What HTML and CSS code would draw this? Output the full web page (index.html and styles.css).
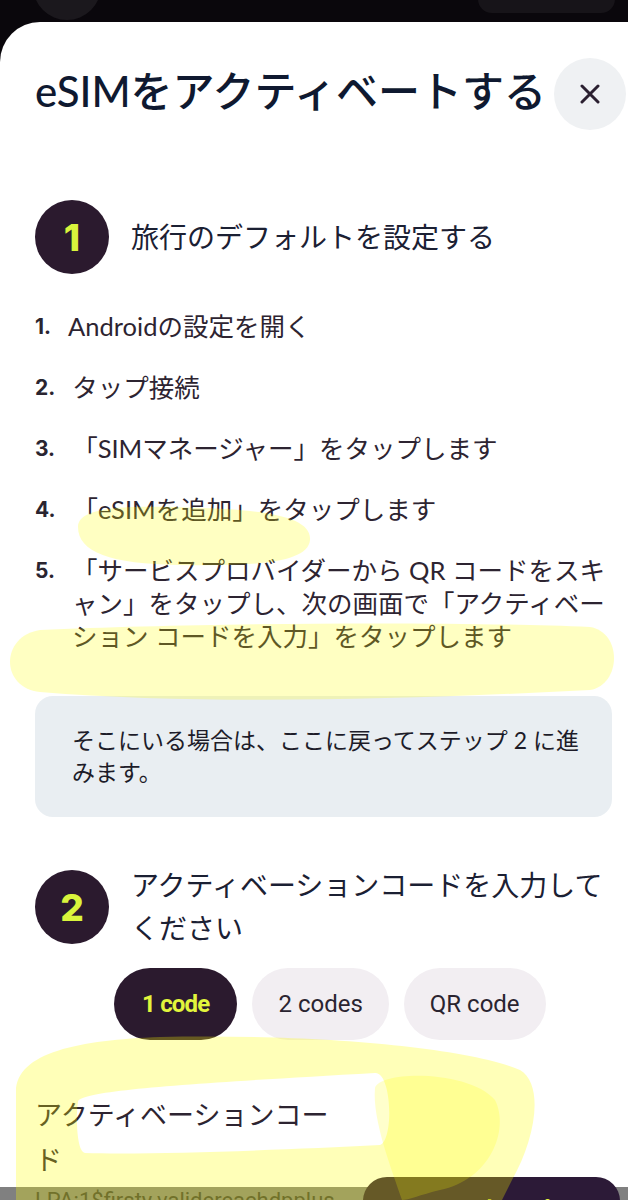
FILE: index.html
```html
<!DOCTYPE html>
<html lang="ja">
<head>
<meta charset="utf-8">
<title>eSIMをアクティベートする</title>
<link rel="stylesheet" href="styles.css">
</head>
<body>
<div class="backdrop">
  <span class="bd-circle"></span>
  <span class="bd-pill"></span>
</div>
<main class="sheet">
  <header class="sheet-head">
    <h1 class="title">eSIMをアクティベートする</h1>
    <button class="close" aria-label="閉じる">
      <svg width="20" height="20" viewBox="0 0 20 20"><path d="M2 2 L18 18 M18 2 L2 18" stroke="#2b2030" stroke-width="3" stroke-linecap="round" fill="none"/></svg>
    </button>
  </header>

  <section class="step step1">
    <div class="step-head">
      <span class="step-num">1</span>
      <h2 class="step-title">旅行のデフォルトを設定する</h2>
    </div>
    <ol class="steps-list">
      <li><span class="n">1.</span><span class="t">Androidの設定を開く</span></li>
      <li><span class="n">2.</span><span class="t">タップ接続</span></li>
      <li><span class="n">3.</span><span class="t">「SIMマネージャー」をタップします</span></li>
      <li><span class="n">4.</span><span class="t">「eSIMを追加」をタップします</span></li>
      <li><span class="n">5.</span><span class="t">「サービスプロバイダーから QR コードをスキャン」をタップし、次の画面で「アクティベーション コードを入力」をタップします</span></li>
    </ol>
    <div class="note">そこにいる場合は、ここに戻ってステップ 2 に進みます。</div>
  </section>

  <section class="step step2">
    <div class="step-head">
      <span class="step-num">2</span>
      <h2 class="step-title">アクティベーションコードを入力してください</h2>
    </div>
    <div class="tabs">
      <button class="tab active">1 code</button>
      <button class="tab">2 codes</button>
      <button class="tab">QR code</button>
    </div>
    <div class="field-label">アクティベーションコード</div>
    <div class="code-row">
      <span class="code-value">LPA:1$firsty.validereachdpplus</span>
      <button class="copy-btn">コードをコピー</button>
    </div>
  </section>
</main>

<svg class="marker-overlay" width="628" height="1200" viewBox="0 0 628 1200" aria-hidden="true">
  <path class="hl" d="M78 527 C 78 504, 140 506, 200 508 C 270 510, 312 518, 310 540 C 308 564, 250 566, 180 565 C 110 564, 78 552, 78 527 Z"/>
  <path class="hl" d="M40 630 C 200 623, 450 621, 590 627 C 622 632, 622 684, 590 690 C 400 700, 200 705, 40 692 C 0 688, 0 636, 40 630 Z"/>
  <path class="hl2" fill-rule="evenodd" d="M16 1092 C 16 1052, 80 1040, 160 1037 C 300 1034, 460 1045, 520 1070 C 545 1085, 535 1140, 512 1180 L 502 1200 L 16 1200 Z M78 1102 C 78 1090, 200 1083, 375 1073 C 392 1072, 394 1140, 380 1145 C 280 1150, 150 1155, 85 1153 C 76 1152, 76 1112, 78 1102 Z"/>
  <path class="hl3" d="M375 1088 C 380 1070, 470 1070, 495 1100 C 510 1130, 490 1180, 440 1190 C 420 1195, 408 1200, 402 1200 C 392 1170, 372 1120, 375 1088 Z"/>
</svg>
</body>
</html>
```
FILE: styles.css
```css
* { box-sizing: border-box; }

body {
  margin: 0;
  background: #0a070c;
  font-family: "Lato", "Noto Sans CJK JP", sans-serif;
  position: relative;
  overflow: hidden;
  height: 1200px;
  text-spacing-trim: space-all;
}

.backdrop {
  height: 22px;
  display: flex;
  justify-content: space-between;
  align-items: flex-start;
  padding: 0 13px 0 33px;
  overflow: hidden;
}
.bd-circle {
  width: 68px;
  height: 68px;
  border-radius: 50%;
  background: #1b181d;
  margin-top: -48px;
}
.bd-pill {
  width: 137px;
  height: 40px;
  border-radius: 14px;
  background: #171419;
  margin-top: -27px;
}

.sheet {
  background: #ffffff;
  border-top-left-radius: 40px;
  padding: 0 16px 0 35px;
  min-height: 1300px;
}

.sheet-head {
  display: flex;
  align-items: center;
  justify-content: space-between;
  padding-top: 36px;
  margin-right: -14px;
}
.title {
  margin: 0;
  font-size: 42px;
  font-weight: 500;
  line-height: 66px;
  padding-bottom: 6px;
  color: #0f1930;
  white-space: nowrap;
}
.close {
  width: 72px;
  height: 72px;
  flex: none;
  border: none;
  border-radius: 50%;
  background: #eff1f3;
  padding: 0;
  display: grid;
  place-items: center;
}

.step1 { margin-top: 70px; }
.step2 { margin-top: 47px; }

.step-head {
  display: flex;
  align-items: center;
  gap: 22px;
}
.step-num {
  width: 74px;
  height: 74px;
  flex: none;
  border-radius: 50%;
  background: #2b1a2e;
  color: #d9f43c;
  font-family: "Inter", sans-serif;
  font-weight: 800;
  font-size: 37px;
  display: grid;
  place-items: center;
}
.step-title {
  margin: 0;
  font-size: 28px;
  font-weight: 400;
  line-height: 43px;
  color: #1b2033;
}

.steps-list {
  list-style: none;
  margin: 36px 0 0;
  padding: 0;
  display: flex;
  flex-direction: column;
  gap: 28px;
}
.steps-list li {
  display: flex;
  gap: 17px;
  font-size: 25.5px;
  line-height: 33px;
  color: #2d2431;
}
.steps-list .n {
  flex: none;
  font-family: "Inter", sans-serif;
  font-weight: 700;
  font-size: 21px;
  color: #2a2530;
}

.note {
  margin-top: 43px;
  background: #e9eef2;
  border-radius: 18px;
  padding: 28px 26px 29px 37px;
  font-size: 23px;
  line-height: 32px;
  color: #1d1c29;
}

.tabs {
  display: flex;
  gap: 15px;
  margin-top: 18px;
  padding-left: 79px;
}
.tab {
  height: 72px;
  padding: 0 26px;
  border: none;
  border-radius: 36px;
  background: #f2eef2;
  font-family: "Roboto", sans-serif;
  font-size: 24px;
  color: #2a2430;
}
.tab.active {
  padding: 0 28px;
  background: #2b1a2e;
  color: #e2f53c;
  font-weight: 700;
  letter-spacing: -0.8px;
}

.field-label {
  margin-top: 52px;
  width: 305px;
  font-size: 27px;
  line-height: 45px;
  color: #2d2431;
}

.code-row {
  display: flex;
  align-items: flex-start;
  margin: -5px -16px 0 -35px;
  padding: 0 8px 0 35px;
  height: 80px;
  background: linear-gradient(to bottom, transparent 10px, #808080 10px);
}
.code-value {
  flex: 1;
  min-width: 0;
  padding-top: 9px;
  font-family: "Roboto", sans-serif;
  font-size: 22px;
  line-height: 30px;
  color: #3b3b3b;
  white-space: nowrap;
  overflow: hidden;
}
.copy-btn {
  flex: none;
  width: 257px;
  height: 62px;
  border: none;
  border-radius: 24px;
  background: #2c1a37;
  color: #e2f53c;
  font-family: "Noto Sans CJK JP", sans-serif;
  font-size: 24px;
  font-weight: 700;
}

.marker-overlay {
  position: absolute;
  top: 0;
  left: 0;
  pointer-events: none;
}
.hl { fill: rgba(255, 255, 0, 0.24); }
.hl2 { fill: rgba(255, 255, 0, 0.28); }
.hl3 { fill: rgba(255, 255, 0, 0.2); }
```
